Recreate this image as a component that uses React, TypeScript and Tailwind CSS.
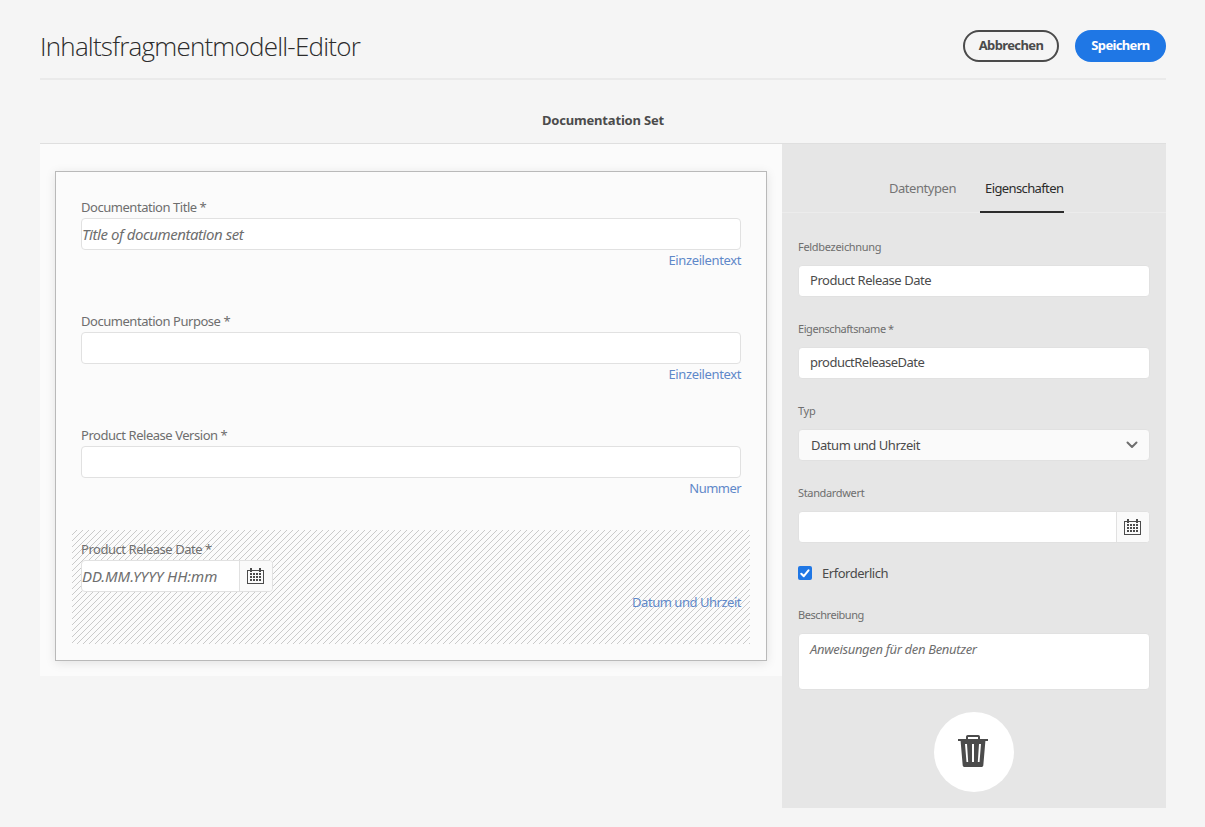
import React from "react";

function CalendarIcon() {
  const cols = [3, 6, 9, 12];
  const rows = [5, 8, 11];
  return (
    <svg width="17" height="16" viewBox="0 0 17 16" shapeRendering="crispEdges" className="block">
      <path d="M0 2h17v14H0zM1 3v12h15V3z" fill="#4b4b4b" fillRule="evenodd" />
      <path d="M3 0h2v4H3zM12 0h2v4h-2z" fill="#4b4b4b" />
      {rows.map((y) => cols.map((x) => <rect key={`${x}-${y}`} x={x} y={y} width="2" height="2" fill="#4b4b4b" />))}
    </svg>
  );
}

function TrashIcon() {
  return (
    <svg width="30" height="32" viewBox="0 0 30 32" className="block">
      <path
        d="M8 4V1.800A1.800 1.800 0 0 1 9.800 0H20.200A1.800 1.800 0 0 1 22 1.800V4H30V6H27.400L25.300 30.500A1.600 1.600 0 0 1 23.700 32H6.300A1.600 1.600 0 0 1 4.700 30.500L2.600 6H0V4ZM10 4H20V2H10Z"
        fill="#4b4b4b"
        fillRule="evenodd"
      />
      <path d="M7 9H9L10.200 27H8.500ZM14 9H16V27H14ZM21 9H23L21.500 27H19.800Z" fill="#fff" />
    </svg>
  );
}

type FieldProps = {
  label: string;
  type: string;
  typeClass: string;
  placeholder?: string;
};

function ModelField({ label, type, typeClass, placeholder }: FieldProps) {
  return (
    <div className="h-[114px] px-[9px] pt-[9px]">
      <div className="mb-px h-5 whitespace-nowrap text-[13px] leading-[20px] tracking-[-0.46px] text-[#6e6e6e]">{label}</div>
      <div className="flex h-8 items-center rounded border border-[#e1e1e1] bg-white text-[15px] italic tracking-[-0.45px] text-[#6e6e6e]">
        {placeholder}
      </div>
      <div className="flex justify-end">
        <span className={`whitespace-nowrap text-[13px] leading-[20px] text-[#5f88c9] ${typeClass}`}>{type}</span>
      </div>
    </div>
  );
}

function PropLabel({ children, className }: { children: React.ReactNode; className: string }) {
  return <div className={`mb-[9px] h-[18px] whitespace-nowrap text-[11px] leading-[18px] text-[#6e6e6e] ${className}`}>{children}</div>;
}

export default function App() {
  return (
    <div className="h-[827px] w-[1205px] overflow-hidden bg-[#f5f5f5] pl-10 pr-[39px] font-['Noto_Sans',sans-serif] text-[#4b4b4b]">
      <header className="flex h-20 items-start justify-between border-b-2 border-[#eaeaea] pt-[30px]">
        <h1 className="whitespace-nowrap font-['Open_Sans',sans-serif] text-[26px] font-light leading-[32px] tracking-[-0.79px] text-[#2c2c2c]">
          Inhaltsfragmentmodell-Editor
        </h1>
        <div className="flex gap-4 text-[13px] font-bold">
          <button className="flex h-8 w-24 items-center justify-center rounded-full border-2 border-[#4b4b4b]">
            <span className="tracking-[-0.62px]">Abbrechen</span>
          </button>
          <button className="flex h-8 w-[91px] items-center justify-center rounded-full bg-[#1f77e5] text-white">
            <span className="tracking-[-0.65px]">Speichern</span>
          </button>
        </div>
      </header>

      <div className="flex h-[64px] items-center justify-center border-b border-[#dfdfdf] pt-[19px] text-[13px] font-bold">
        <span className="tracking-[-0.18px]">Documentation Set</span>
      </div>

      <main className="flex items-start">
        <section className="h-[532px] w-[742px] bg-[#fbfbfb] px-[15px] pt-[27px]">
          <div className="h-[490px] w-[712px] border border-[#b9b9b9] px-4 pt-4 shadow-[0_2px_10px_rgba(0,0,0,0.1)]">
            <ModelField label="Documentation Title *" type="Einzeilentext" typeClass="tracking-[-0.38px]" placeholder="Title of documentation set" />
            <ModelField label="Documentation Purpose *" type="Einzeilentext" typeClass="tracking-[-0.38px]" />
            <ModelField label="Product Release Version *" type="Nummer" typeClass="tracking-[-0.55px]" />
            <div className="h-[114px] bg-[linear-gradient(135deg,transparent_37.5%,#cacaca_37.5%,#cacaca_45.8%,transparent_45.8%,transparent_87.5%,#cacaca_87.5%,#cacaca_95.8%,transparent_95.8%)] bg-[length:6px_6px] px-[9px] pt-[9px]">
              <div className="mb-px h-5 whitespace-nowrap text-[13px] leading-[20px] tracking-[-0.46px] text-[#6e6e6e]">Product Release Date *</div>
              <div className="flex h-8 w-[192px] overflow-hidden rounded border border-[#e1e1e1] bg-white">
                <div className="flex flex-1 items-center whitespace-nowrap text-[15px] italic tracking-[-0.07px] text-[#6e6e6e]">DD.MM.YYYY HH:mm</div>
                <div className="flex w-[33px] items-center border-l border-[#e1e1e1] bg-[#fafafa] pl-[7px]">
                  <CalendarIcon />
                </div>
              </div>
              <div className="flex justify-end">
                <span className="whitespace-nowrap text-[13px] leading-[20px] tracking-[-0.47px] text-[#5f88c9]">Datum und Uhrzeit</span>
              </div>
            </div>
          </div>
        </section>

        <aside className="h-[664px] w-[384px] bg-[#e6e6e6]">
          <nav className="flex h-[69px] justify-center gap-6 border-b border-[#ececec] pl-[5px] pt-[20px] text-[13px]">
            <div className="flex h-[49px] items-center text-[#747474]">
              <span className="tracking-[-0.45px]">Datentypen</span>
            </div>
            <div className="flex h-[49px] w-[84px] items-center border-b-2 border-[#2c2c2c] pl-[5px] pt-[2px] text-[#2c2c2c]">
              <span className="tracking-[-0.61px]">Eigenschaften</span>
            </div>
          </nav>
          <div className="px-4 pt-[25px]">
            <PropLabel className="tracking-[-0.3px]">Feldbezeichnung</PropLabel>
            <div className="mb-[23px] flex h-8 items-center rounded border border-[#e1e1e1] bg-white pl-[11px] text-[13px] tracking-[-0.46px]">Product Release Date</div>
            <PropLabel className="tracking-[-0.44px]">Eigenschaftsname *</PropLabel>
            <div className="mb-[23px] flex h-8 items-center rounded border border-[#e1e1e1] bg-white pl-[11px] text-[13px] tracking-[-0.52px]">productReleaseDate</div>
            <PropLabel className="tracking-[-0.3px]">Typ</PropLabel>
            <div className="mb-[23px] flex h-8 items-center justify-between rounded border border-[#e1e1e1] bg-[#fafafa] pl-3 pr-[11px] text-[13px]">
              <span className="pt-[2px] tracking-[-0.47px]">Datum und Uhrzeit</span>
              <svg width="12" height="8" viewBox="0 0 12 8">
                <path d="M1.500 1.500L6 6L10.500 1.500" fill="none" stroke="#6e6e6e" strokeWidth="2" strokeLinecap="round" strokeLinejoin="round" />
              </svg>
            </div>
            <PropLabel className="tracking-[-0.34px]">Standardwert</PropLabel>
            <div className="mb-5 flex h-8 overflow-hidden rounded border border-[#e1e1e1] bg-white">
              <div className="flex-1" />
              <div className="flex w-[33px] items-center border-l border-[#e1e1e1] bg-[#fafafa] pl-[7px]">
                <CalendarIcon />
              </div>
            </div>
            <div className="mb-[23px] flex h-5 items-center gap-[10px] text-[13px]">
              <div className="flex size-[14px] items-center justify-center rounded-[2px] bg-[#1f77e5]">
                <svg width="10" height="9" viewBox="0 0 10 9">
                  <path d="M1.300 4.700L3.800 7.200L8.500 1.300" fill="none" stroke="#fff" strokeWidth="2" strokeLinecap="round" strokeLinejoin="round" />
                </svg>
              </div>
              <span className="pt-px tracking-[-0.47px]">Erforderlich</span>
            </div>
            <PropLabel className="tracking-[-0.44px]">Beschreibung</PropLabel>
            <div className="h-[57px] rounded border border-[#e1e1e1] bg-white pl-[11px] pt-[5px] text-[13px] italic leading-[20px] tracking-[-0.33px] text-[#6e6e6e]">Anweisungen für den Benutzer</div>
            <div className="mx-auto mt-[22px] flex size-20 items-start rounded-full bg-white pl-6 pt-[23px]">
              <TrashIcon />
            </div>
          </div>
        </aside>
      </main>
    </div>
  );
}
